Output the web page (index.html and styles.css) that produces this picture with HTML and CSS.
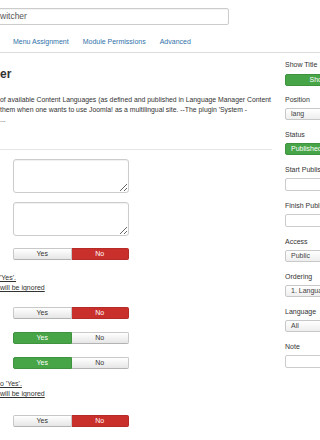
FILE: index.html
```html
<!DOCTYPE html>
<html>
<head>
    <title>Module: Language Switcher</title>
    <link rel="stylesheet" href="styles.css">
</head>
<body>
    <div class="page">
        <div class="title-row">
            <div class="title-input">witcher</div>
        </div>

        <ul class="tabs">
            <li><a href="#">Menu Assignment</a></li>
            <li><a href="#">Module Permissions</a></li>
            <li><a href="#">Advanced</a></li>
        </ul>

        <div class="layout">
            <div class="main">
                <h2 class="module-title">er</h2>
                <p class="desc">
                    of available Content Languages (as defined and published in Language Manager Content<br>
                    them when one wants to use Joomla! as a multilingual site. --The plugin 'System -<br>
                    ...
                </p>
                <hr class="divider">

                <div class="controls">
                    <textarea class="field-area"></textarea>
                    <textarea class="field-area"></textarea>

                    <div class="toggle first-toggle">
                        <span class="opt">Yes</span>
                        <span class="opt opt-no">No</span>
                    </div>

                    <p class="note"><span>'Yes'.</span><br><span>will be ignored</span></p>

                    <div class="toggle after-note">
                        <span class="opt">Yes</span>
                        <span class="opt opt-no">No</span>
                    </div>
                    <div class="toggle">
                        <span class="opt opt-yes">Yes</span>
                        <span class="opt">No</span>
                    </div>
                    <div class="toggle">
                        <span class="opt opt-yes">Yes</span>
                        <span class="opt">No</span>
                    </div>

                    <p class="note note-low"><span>o 'Yes'.</span><br><span>will be ignored</span></p>

                    <div class="toggle after-note-low">
                        <span class="opt">Yes</span>
                        <span class="opt opt-no">No</span>
                    </div>
                </div>
            </div>

            <div class="side">
                <div class="side-field">
                    <label>Show Title</label>
                    <div class="side-toggle">
                        <span class="opt opt-yes">Show</span>
                        <span class="opt">Hide</span>
                    </div>
                </div>
                <div class="side-field">
                    <label>Position</label>
                    <div class="select">lang</div>
                </div>
                <div class="side-field">
                    <label>Status</label>
                    <div class="select select-green">Published</div>
                </div>
                <div class="side-field">
                    <label>Start Publishing</label>
                    <div class="text-box"></div>
                </div>
                <div class="side-field">
                    <label>Finish Publishing</label>
                    <div class="text-box"></div>
                </div>
                <div class="side-field">
                    <label>Access</label>
                    <div class="select">Public</div>
                </div>
                <div class="side-field">
                    <label>Ordering</label>
                    <div class="select">1. Language Switcher</div>
                </div>
                <div class="side-field">
                    <label>Language</label>
                    <div class="select">All</div>
                </div>
                <div class="side-field">
                    <label>Note</label>
                    <div class="text-box"></div>
                </div>
            </div>
        </div>
    </div>
</body>
</html>
```

FILE: styles.css
```css
html, body {
    overflow: hidden;
}
body {
    margin: 0;
    font-family: "Liberation Sans", Arial, sans-serif;
    color: #333;
    background: #fff;
}
.page {
    width: 400px;
}
.title-row {
    padding-top: 8px;
}
.title-input {
    box-sizing: border-box;
    margin-left: -20px;
    width: 249px;
    height: 17px;
    padding-left: 19px;
    border: 1px solid #ccc;
    border-radius: 2px;
    font-size: 8.5px;
    line-height: 15px;
    color: #555;
    box-shadow: inset 0 1px 1px rgba(0, 0, 0, 0.05);
}
.tabs {
    display: flex;
    gap: 14px;
    list-style: none;
    margin: 8px 0 0 0;
    padding: 0 0 0 13px;
    border-bottom: 1px solid #ddd;
}
.tabs a {
    display: block;
    padding: 4px 0 5px;
    line-height: 10px;
    font-size: 7px;
    color: #3071a9;
    text-decoration: none;
}
.layout {
    display: grid;
    grid-template-columns: 272px 110px;
    column-gap: 13px;
}
.module-title {
    margin: 14px 0 0;
    font-size: 12px;
    line-height: 14px;
    font-weight: bold;
}
.desc {
    margin: 14px 0 0;
    font-size: 6.85px;
    line-height: 10px;
    white-space: nowrap;
}
.divider {
    margin: 24px 0 9px;
    border: 0;
    border-top: 1px solid #e5e5e5;
    height: 0;
}
.controls {
    display: flex;
    flex-direction: column;
    align-items: flex-start;
}
.field-area {
    box-sizing: border-box;
    margin: 0 0 9px 13px;
    width: 116px;
    height: 34px;
    border: 1px solid #ccc;
    border-radius: 3px;
    box-shadow: inset 0 1px 1px rgba(0, 0, 0, 0.06);
}
.toggle {
    display: flex;
    margin: 13px 0 0 13px;
    width: 116px;
    height: 12px;
}
.first-toggle {
    margin-top: 3px;
}
.after-note {
    margin-top: 14px;
}
.after-note-low {
    margin-top: 16px;
}
.opt {
    flex: 1;
    box-sizing: border-box;
    font-size: 7px;
    line-height: 10px;
    text-align: center;
    color: #333;
    background: linear-gradient(#fff, #e6e6e6);
    border: 1px solid #c8c8c8;
    border-bottom-color: #b3b3b3;
}
.opt:first-child {
    border-radius: 2px 0 0 2px;
}
.opt:last-child {
    border-radius: 0 2px 2px 0;
    border-left: 0;
}
.opt-no {
    color: #fff;
    background: #c9302c;
    border-color: #b52b27;
}
.opt-yes {
    color: #fff;
    background: #47a447;
    border-color: #3f933f;
}
.note {
    margin: 13px 0 0;
    font-size: 7px;
    line-height: 10px;
    white-space: nowrap;
}
.note span {
    text-decoration: underline;
}
.note-low {
    margin-top: 10px;
}
.side {
    padding-top: 7px;
}
.side-field {
    margin-bottom: 10px;
}
.side-field label {
    display: block;
    margin-bottom: 3px;
    font-size: 7px;
    line-height: 10px;
    color: #333;
}
.side-toggle {
    display: flex;
    margin-top: 4px;
    margin-bottom: -1px;
    width: 132px;
    height: 12px;
}
.select {
    box-sizing: border-box;
    height: 12px;
    padding-left: 5px;
    border: 1px solid #c8c8c8;
    border-radius: 2px;
    background: linear-gradient(#fff, #eee);
    font-size: 7px;
    line-height: 10px;
    color: #444;
    white-space: nowrap;
}
.select-green {
    color: #fff;
    background: #47a447;
    border-color: #3f933f;
}
.text-box {
    box-sizing: border-box;
    height: 13px;
    border: 1px solid #ccc;
    border-radius: 2px;
    background: #fff;
}
```
